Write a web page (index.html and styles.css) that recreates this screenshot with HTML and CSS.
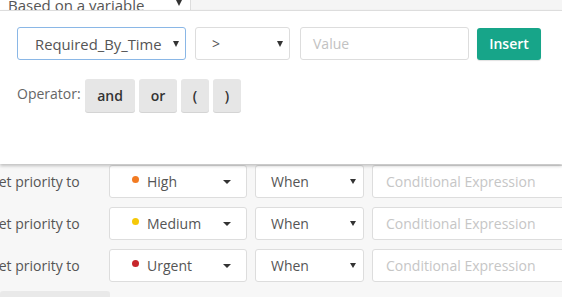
FILE: index.html
```html
<!DOCTYPE html>
<html>
<head>
<meta charset="utf-8">
<link rel="stylesheet" href="styles.css">
</head>
<body>
<div class="page">
  <div class="topbar">
    <div class="top-select">
      <span class="top-text">Based on a variable</span>
      <span class="caret"></span>
    </div>
    <div class="top-rest"></div>
  </div>

  <div class="rows">
    <div class="row">
      <span class="row-label">Set priority to</span>
      <div class="box prio">
        <span class="dot dot-high"></span><span class="prio-text">High</span>
        <span class="caret caret-wide"></span>
      </div>
      <div class="box when"><span>When</span><span class="caret"></span></div>
      <div class="box cond">Conditional Expression</div>
    </div>
    <div class="row">
      <span class="row-label">Set priority to</span>
      <div class="box prio">
        <span class="dot dot-medium"></span><span class="prio-text">Medium</span>
        <span class="caret caret-wide"></span>
      </div>
      <div class="box when"><span>When</span><span class="caret"></span></div>
      <div class="box cond">Conditional Expression</div>
    </div>
    <div class="row">
      <span class="row-label">Set priority to</span>
      <div class="box prio">
        <span class="dot dot-urgent"></span><span class="prio-text">Urgent</span>
        <span class="caret caret-wide"></span>
      </div>
      <div class="box when"><span>When</span><span class="caret"></span></div>
      <div class="box cond">Conditional Expression</div>
    </div>
    <div class="footer-btn"></div>
  </div>

  <div class="popup">
    <div class="popup-line">
      <div class="box var-select"><span class="var-text">Required_By_Time</span><span class="caret"></span></div>
      <div class="box op-select"><span>&gt;</span><span class="caret"></span></div>
      <div class="box value-input">Value</div>
      <button class="insert">Insert</button>
    </div>
    <div class="operator-line">
      <span class="op-label">Operator:</span>
      <button class="op-btn op-and">and</button>
      <button class="op-btn op-or">or</button>
      <button class="op-btn op-paren">(</button>
      <button class="op-btn op-paren">)</button>
    </div>
  </div>
</div>
</body>
</html>
```

FILE: styles.css
```css
* { box-sizing: border-box; }
html, body {
  margin: 0;
  padding: 0;
  width: 562px;
  height: 297px;
  overflow: hidden;
}
body {
  font-family: "Open Sans", "Liberation Sans", sans-serif;
  font-size: 14px;
  color: #555;
  background: #f7f7f7;
}
.page {
  position: relative;
  width: 562px;
  height: 297px;
  overflow: hidden;
}

/* top strip */
.topbar {
  display: flex;
  height: 10px;
  overflow: hidden;
}
.top-select {
  width: 191px;
  height: 30px;
  margin-top: -20px;
  padding: 0 8px 0 8px;
  background: #fff;
  border-right: 1px solid #ddd;
  display: flex;
  align-items: flex-end;
  justify-content: space-between;
}
.top-text {
  font-size: 15px;
  line-height: 20px;
  color: #555;
  margin-bottom: -5px;
}
.top-select .caret {
  margin-bottom: 4px;
}
.top-rest {
  flex: 1;
  background: #f5f5f5;
}

/* carets */
.caret {
  width: 0;
  height: 0;
  border-left: 3.5px solid transparent;
  border-right: 3.5px solid transparent;
  border-top: 6px solid #333;
  flex: none;
}
.caret-wide {
  border-left-width: 4.5px;
  border-right-width: 4.5px;
  border-top-width: 4px;
  margin-left: auto;
}

/* boxes */
.box {
  height: 33px;
  border: 1px solid #ddd;
  border-radius: 3px;
  background: #fff;
  display: flex;
  align-items: center;
  flex: none;
}

/* rows */
.rows {
  padding-top: 155px;
}
.row {
  display: flex;
  align-items: center;
  gap: 9px;
  height: 33px;
  margin-bottom: 9px;
  margin-left: -9px;
}
.row-label {
  width: 109px;
  flex: none;
  color: #555;
  white-space: nowrap;
}
.prio {
  width: 138px;
  padding: 0 15px 0 22px;
}
.dot {
  width: 7px;
  height: 7px;
  border-radius: 50%;
  margin-right: 8px;
  margin-top: -4px;
  flex: none;
}
.dot-high { background: #f27b22; }
.dot-medium { background: #f5c808; }
.dot-urgent { background: #c7262b; }
.prio-text { color: #555; }
.when {
  width: 109px;
  padding: 0 7px 0 15px;
  justify-content: space-between;
  margin-left: -1px;
}
.when .caret {
  border-left-width: 3px;
  border-right-width: 3px;
  border-top-width: 5px;
}
.cond {
  width: 220px;
  padding-left: 13px;
  color: #c6c6c6;
  white-space: nowrap;
  margin-left: -1px;
}
.footer-btn {
  width: 110px;
  height: 14px;
  background: #e9e9e9;
  border-radius: 3px;
  margin-top: 2px;
}

/* popup */
.popup {
  position: absolute;
  top: 10px;
  left: 0;
  width: 562px;
  height: 154px;
  background: #fff;
  border-top: 1px solid #ddd;
  box-shadow: 0 2px 3px rgba(0, 0, 0, 0.22);
  padding: 16px 0 0 17px;
}
.popup-line {
  display: flex;
  align-items: center;
  gap: 9px;
}
.var-select {
  width: 169px;
  border-color: #8ab7e6;
  padding: 0 6px 0 17px;
  justify-content: space-between;
}
.var-text {
  font-size: 14.8px;
}
.var-select .caret,
.op-select .caret {
  border-left-width: 3px;
  border-right-width: 3px;
  border-top-width: 6px;
}
.op-select {
  width: 95px;
  padding: 0 6px 0 16px;
  justify-content: space-between;
}
.value-input {
  width: 169px;
  margin-left: 1px;
  padding-left: 12px;
  color: #c2c2c2;
}
.insert {
  width: 64px;
  height: 32px;
  margin-left: -1px;
  border: none;
  border-radius: 3px;
  background: #17a589;
  color: #fff;
  font-family: "Open Sans", "Liberation Sans", sans-serif;
  font-size: 14px;
  font-weight: 600;
  padding: 0;
  box-shadow: 0 1px 1px rgba(0, 0, 0, 0.12);
}
.operator-line {
  display: flex;
  align-items: center;
  margin-top: 19px;
  gap: 4px;
}
.op-label {
  width: 64px;
  color: #666;
  margin-top: -4px;
}
.op-btn {
  height: 33px;
  border: none;
  border-radius: 3px;
  background: #e6e6e6;
  box-shadow: 0 1px 0 #d4d4d4;
  color: #333;
  font-family: "Open Sans", "Liberation Sans", sans-serif;
  font-size: 14px;
  font-weight: 600;
  padding: 0;
}
.op-and { width: 50px; }
.op-or { width: 38px; }
.op-paren { width: 28px; }
```
